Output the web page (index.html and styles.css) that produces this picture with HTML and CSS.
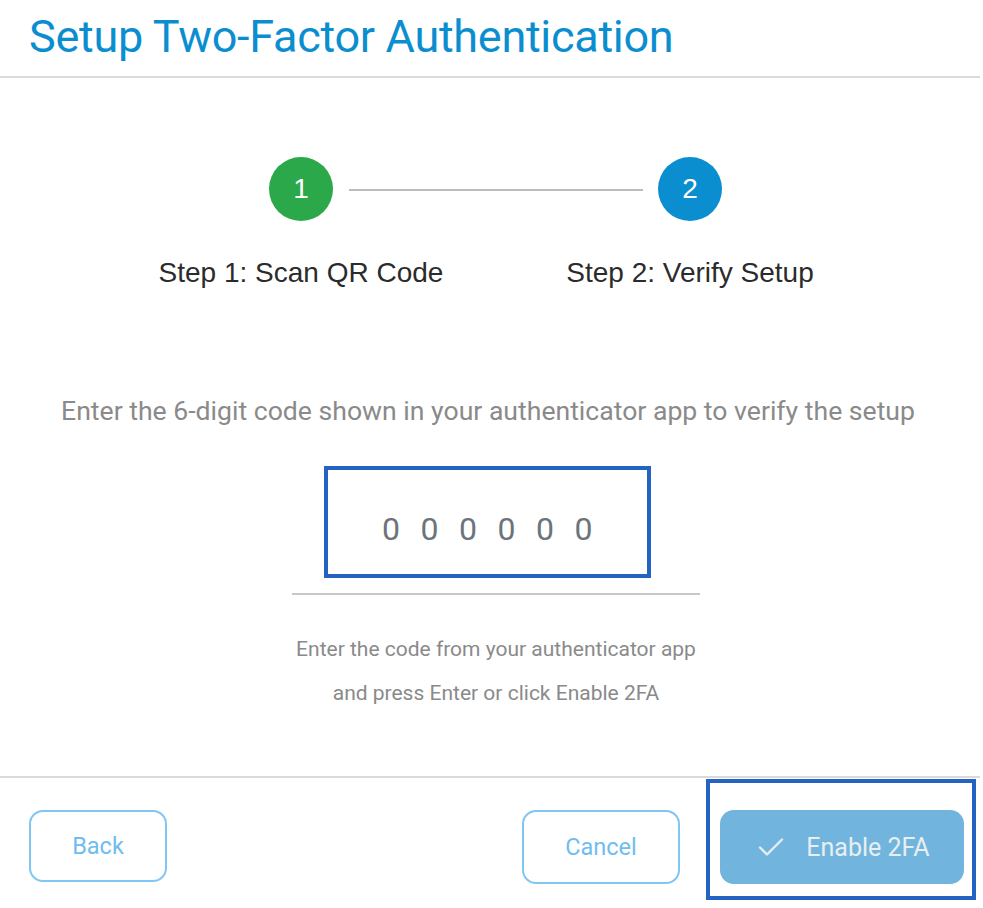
FILE: index.html
```html
<!DOCTYPE html>
<html>
<head>
<meta charset="utf-8">
<link rel="stylesheet" href="styles.css">
</head>
<body>
<div class="dialog">
  <header class="head">
    <h1 class="title">Setup Two-Factor Authentication</h1>
  </header>
  <main class="body">
    <div class="stepper">
      <div class="step">
        <div class="circle done">1</div>
        <div class="label">Step 1: Scan QR Code</div>
      </div>
      <div class="connector"></div>
      <div class="step">
        <div class="circle active">2</div>
        <div class="label">Step 2: Verify Setup</div>
      </div>
    </div>
    <p class="instr">Enter the 6-digit code shown in your authenticator app to verify the setup</p>
    <div class="field">
      <div class="codebox"><span class="code">000000</span></div>
      <div class="underline"></div>
    </div>
    <p class="hint">Enter the code from your authenticator app<br>and press Enter or click Enable 2FA</p>
  </main>
  <footer class="foot">
    <button class="btn outline back">Back</button>
    <div class="right">
      <button class="btn outline cancel">Cancel</button>
      <div class="focusring">
        <button class="btn primary">
          <svg class="check" width="26" height="20" viewBox="0 0 26 20"><path d="M2 10.5 L9 17.5 L24 2.5" fill="none" stroke="#e6edf2" stroke-width="2.4" stroke-linecap="round" stroke-linejoin="round"/></svg>
          <span>Enable 2FA</span>
        </button>
      </div>
    </div>
  </footer>
</div>
</body>
</html>
```
FILE: styles.css
```css
html, body { margin: 0; padding: 0; background: #fff; }
body { width: 983px; height: 908px; overflow: hidden; font-family: Roboto, "Liberation Sans", sans-serif; }
.dialog { width: 980px; }
.head { border-bottom: 2px solid #dadada; height: 78px; box-sizing: border-box; padding: 12px 0 0 29px; }
.title { margin: 0; font-weight: 400; font-size: 45px; line-height: 50px; color: #0b8ecf; letter-spacing: -0.3px; }
.body { height: 700px; box-sizing: border-box; padding-top: 79px; border-bottom: 2px solid #dadada; display: flex; flex-direction: column; align-items: center; }
.stepper { display: flex; align-items: flex-start; margin-left: 11px; }
.step { width: 300px; display: flex; flex-direction: column; align-items: center; }
.circle { width: 64px; height: 64px; border-radius: 50%; color: #fff; font-family: "Liberation Sans", Arial, sans-serif; font-size: 28px; display: flex; align-items: center; justify-content: center; }
.circle.done { background: #2aa84a; }
.circle.active { background: #0a8ecf; }
.label { margin-top: 36px; font-family: "Liberation Sans", Arial, sans-serif; font-size: 28px; color: #2b2b2b; line-height: 32px; white-space: nowrap; }
.connector { width: 294px; height: 2px; background: #bdbdbd; margin: 32px -102.5px 0; }
.instr { margin: 106px 0 0 -4px; font-size: 26.6px; color: #8a8a8a; line-height: 32px; white-space: nowrap; }
.field { margin: 39px 0 0 12px; width: 408px; display: flex; flex-direction: column; align-items: flex-start; }
.codebox { margin-left: 32px; width: 327px; height: 112px; box-sizing: border-box; border: 4px solid #2563c2; display: flex; align-items: center; justify-content: center; padding-top: 14px; }
.code { font-size: 32px; color: #6b737b; letter-spacing: 20.5px; margin-left: 20px; }
.underline { width: 408px; height: 2px; background: #c8c8c8; margin-top: 15px; }
.hint { margin: 32px 0 0 12px; font-size: 21px; color: #8a8a8a; line-height: 44px; text-align: center; }
.foot { display: flex; align-items: flex-start; justify-content: space-between; padding: 0 4px 0 29px; }
.right { display: flex; align-items: flex-start; }
.btn { font-family: Roboto, sans-serif; font-size: 23.5px; box-sizing: border-box; border-radius: 14px; cursor: pointer; }
.btn.outline { background: #fff; border: 2px solid #80c6f3; color: #6fbdf0; margin-top: 32px; }
.back { width: 138px; height: 72px; }
.cancel { width: 158px; height: 74px; margin-right: 26px; }
.focusring { border: 4px solid #2563c2; width: 270px; height: 121px; box-sizing: border-box; padding: 27px 0 0 10px; margin-top: 1px; }
.btn.primary { width: 244px; height: 74px; background: #71b5de; border: none; color: #e8eef2; font-size: 25px; display: flex; align-items: center; justify-content: center; gap: 22px; padding-right: 2px; }
```
